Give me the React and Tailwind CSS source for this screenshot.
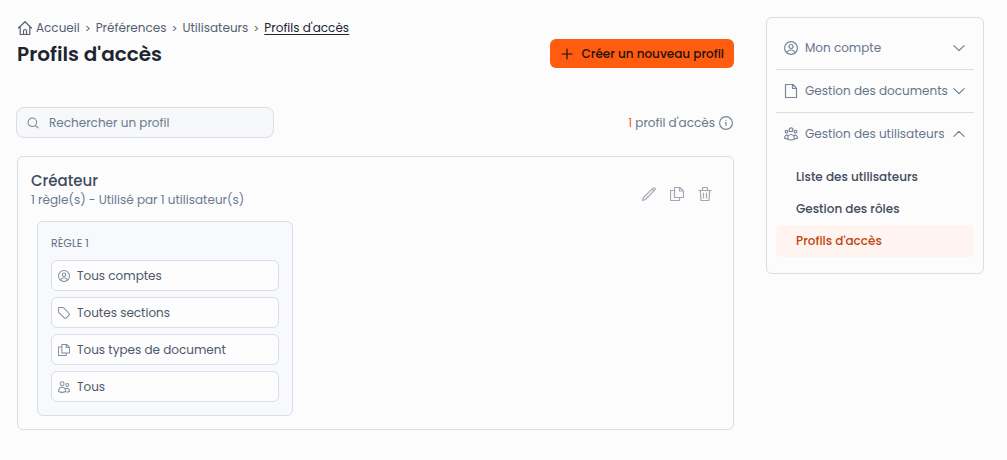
import { useState } from 'react';

function Icon({ children, className = 'size-3.5', viewBox = '0 0 14 14' }) {
  return (
    <svg
      className={`shrink-0 ${className}`}
      viewBox={viewBox}
      fill="none"
      stroke="currentColor"
      strokeWidth="1.2"
      strokeLinecap="round"
      strokeLinejoin="round"
      aria-hidden="true"
    >
      {children}
    </svg>
  );
}

function HomeIcon({ className }) {
  return (
    <Icon className={className}>
      <path d="M.5 7 7 .7 13.5 7M2.2 5.5v8h9.6v-8M5.5 13.5V10a1.5 1.5 0 0 1 3 0v3.5" />
    </Icon>
  );
}

function UserIcon({ className }) {
  return (
    <Icon className={className}>
      <circle cx="7" cy="7" r="6.4" />
      <circle cx="7" cy="5.5" r="2" />
      <path d="M2.8 11.6a4.7 4.7 0 0 1 8.4 0" />
    </Icon>
  );
}

function FileIcon({ className }) {
  return (
    <Icon className={className}>
      <path d="M1.5.5H9L12.500 4.500V13.500H1.500zM8.500.5V4.500H12.500" />
    </Icon>
  );
}

function TeamIcon({ className }) {
  return (
    <Icon className={className}>
      <circle cx="7" cy="2.8" r="1.9" />
      <circle cx="2.5" cy="4.7" r="1.3" />
      <circle cx="11.5" cy="4.7" r="1.3" />
      <path d="M3.6 11.9a3.4 4.4 0 0 1 6.8 0c-1.800 1.300-5 1.300-6.800 0zM3.700 8.400C1.900 7.600.8 8.800.5 11c.8.7 1.900.9 3 .8M10.300 8.400c1.800-.8 2.900.4 3.200 2.600-.8.7-1.900.9-3 .8" />
    </Icon>
  );
}

function TagIcon({ className }) {
  return (
    <Icon className={className}>
      <path d="M1.2.6h4.300c.4 0 .8.2 1.100.5l6.200 6.200c.7.7.7 1.600 0 2.300l-3.200 3.200c-.7.7-1.600.7-2.300 0L1.100 6.600C.8 6.300.6 5.900.6 5.500V1.200c0-.3.3-.6.6-.6z" />
    </Icon>
  );
}

function CopyIcon({ className }) {
  return (
    <Icon className={className}>
      <path d="M4.500.5H10L13.500 4V10.500H4.500zM9.500.5V4H13.500M4.500 3.500H.5V13.500H9.500V10.500" />
    </Icon>
  );
}

function UsersIcon({ className }) {
  return (
    <Icon className={className}>
      <circle cx="4.8" cy="3.3" r="2.3" />
      <circle cx="10.8" cy="4.7" r="1.7" />
      <path d="M.6 12.300c.2-3.300 1.800-5 4.200-5s4 1.700 4.200 5c-2.400 1.100-6 1.100-8.400 0zM9.300 8.800c2.400-.7 3.900.7 4.200 3.500-1 .5-2.300.7-3.500.5" />
    </Icon>
  );
}

function PencilIcon({ className }) {
  return (
    <Icon className={className}>
      <path d="m.6 13.400.9-2.900 9.600-9.400c.5-.5 1.300-.5 1.800 0s.5 1.300 0 1.800l-9.500 9.600zM10 2.200l1.800 1.800" />
    </Icon>
  );
}

function TrashIcon({ className }) {
  return (
    <Icon className={className}>
      <path d="M.8 3.500h12.400M2.300 3.500l.7 10h8l.7-10M4.500 3.500v-2c0-.6.4-1 1-1h3c.6 0 1 .4 1 1v2M5.500 6v5M8.500 6v5" />
    </Icon>
  );
}

function Chevron({ open }) {
  return (
    <Icon className="size-3">
      <path d={open ? 'M1 9.800 7 4l6 5.800' : 'M1 4.200 7 10l6-5.800'} />
    </Icon>
  );
}

const RULES = [
  { label: 'Tous comptes', icon: UserIcon },
  { label: 'Toutes sections', icon: TagIcon },
  { label: 'Tous types de document', icon: CopyIcon },
  { label: 'Tous', icon: UsersIcon },
];

const ACTIONS = [
  { label: 'Modifier', icon: PencilIcon },
  { label: 'Dupliquer', icon: CopyIcon },
  { label: 'Supprimer', icon: TrashIcon },
];

const MENU = [
  { label: 'Mon compte', icon: UserIcon, items: [] },
  { label: 'Gestion des documents', icon: FileIcon, items: [] },
  {
    label: 'Gestion des utilisateurs',
    icon: TeamIcon,
    items: ['Liste des utilisateurs', 'Gestion des rôles', "Profils d'accès"],
  },
];

function Breadcrumb() {
  return (
    <nav aria-label="Fil d'Ariane" className="flex items-center gap-[5px] text-xs leading-[22px] text-[#556070]">
      <a href="#accueil" className="flex items-center gap-1">
        <HomeIcon className="ml-px size-3.5" />
        Accueil
      </a>
      <span className="text-[11px]">&gt;</span>
      <a href="#preferences">Préférences</a>
      <span className="text-[11px]">&gt;</span>
      <a href="#utilisateurs">Utilisateurs</a>
      <span className="text-[11px]">&gt;</span>
      <a href="#profils" aria-current="page" className="text-[#20242e] underline underline-offset-2">
        Profils d'accès
      </a>
    </nav>
  );
}

function ProfileCard() {
  return (
    <section className="mt-[18px] rounded-md border border-[#d9dde8] px-[13px] pt-3.5 pb-[13px]">
      <div className="flex items-center justify-between">
        <div>
          <h2 className="text-[15px] leading-5 font-medium text-[#414b5c]">Créateur</h2>
          <p className="text-xs leading-[18px] text-[#6b7a8d]">1 règle(s) - Utilisé par 1 utilisateur(s)</p>
        </div>
        <div className="mt-2 mr-2 flex gap-3.5 text-[#a3a8b4]">
          {ACTIONS.map(({ label, icon: ActionIcon }) => (
            <button key={label} type="button" aria-label={label}>
              <ActionIcon className="size-3.5" />
            </button>
          ))}
        </div>
      </div>

      <div className="mt-3 ml-1.5 w-64 rounded-md border border-[#d9dde8] bg-[#f8f9fc] px-[13px] pt-[11px] pb-3">
        <h3 className="text-[11px] leading-5 text-[#5f6f82]">RÈGLE 1</h3>
        <ul className="mt-[7px] mb-px flex flex-col gap-1.5">
          {RULES.map(({ label, icon: RuleIcon }) => (
            <li
              key={label}
              className="flex h-[31px] items-center gap-[7px] rounded-md border border-[#d9dde8] bg-[#fdfdfd] px-1.5 text-xs text-[#4d5868]"
            >
              <RuleIcon className="size-3 text-[#858d9e]" />
              {label}
            </li>
          ))}
        </ul>
      </div>
    </section>
  );
}

function SideMenu() {
  const [open, setOpen] = useState('Gestion des utilisateurs');

  return (
    <aside className="w-[218px] shrink-0 self-start rounded-md border border-[#d9dde8] px-[9px] pt-[9px] pb-4">
      {MENU.map(({ label, icon: MenuIcon, items }) => (
        <div key={label} className="border-b border-[#d9dde8] last:border-b-0">
          <button
            type="button"
            aria-expanded={open === label}
            onClick={() => setOpen(open === label ? null : label)}
            className="flex h-[42px] w-full items-center pr-[9px] pl-2 text-xs whitespace-nowrap text-[#67768a]"
          >
            <MenuIcon className="mr-[7px] size-3.5 text-[#7a8599]" />
            <span className="flex-1 text-left">{label}</span>
            <Chevron open={open === label} />
          </button>
          {open === label && items.length > 0 && (
            <ul className="pt-1.5">
              {items.map((item) => (
                <li key={item}>
                  <a
                    href="#menu"
                    className={`flex h-8 items-center rounded-md px-5 text-xs font-medium ${
                      item === "Profils d'accès" ? 'bg-[#fff4f0] text-[#c2440e]' : 'text-[#414b5c]'
                    }`}
                  >
                    {item}
                  </a>
                </li>
              ))}
            </ul>
          )}
        </div>
      ))}
    </aside>
  );
}

export default function App() {
  return (
    <div className="flex min-h-screen gap-8 bg-[#fcfcfd] py-[17px] pr-[23px] pl-[17px] font-['Poppins','Inter',sans-serif]">
      <main className="min-w-0 flex-1">
        <header>
          <Breadcrumb />
          <div className="flex items-start justify-between">
            <h1 className="text-xl leading-[30px] font-semibold text-[#20242e]">Profils d'accès</h1>
            <button
              type="button"
              className="flex h-[29px] items-center gap-2 rounded-md bg-[#ff5c0f] px-2.5 text-xs font-medium text-[#1d130c]"
            >
              <Icon className="size-3.5">
                <path d="M7 2v10M2 7h10" />
              </Icon>
              Créer un nouveau profil
            </button>
          </div>
        </header>

        <div className="mt-[38px] flex items-center justify-between">
          <label className="-ml-px flex h-[31px] w-[258px] items-center gap-2.5 rounded-lg border border-[#d9dde8] bg-[#f6f8fa] px-2.5 text-[#7a8496]">
            <Icon className="size-3">
              <circle cx="6.2" cy="6.2" r="5" />
              <path d="m10 10 2.800 2.800" />
            </Icon>
            <input
              type="search"
              aria-label="Rechercher un profil"
              placeholder="Rechercher un profil"
              className="min-w-0 flex-1 bg-transparent text-xs outline-none placeholder:text-[#6b7a8d]"
            />
          </label>
          <p className="mr-px flex items-center gap-1 text-xs text-[#67768a]">
            <span>
              <span className="text-[#ff5c0f]">1</span> profil d'accès
            </span>
            <Icon className="size-3.5 text-[#7a8599]">
              <circle cx="7" cy="7" r="6.4" />
              <path d="M6.500 6.500H7v3M7 4.300v.1" />
            </Icon>
          </p>
        </div>

        <ProfileCard />
      </main>
      <SideMenu />
    </div>
  );
}
